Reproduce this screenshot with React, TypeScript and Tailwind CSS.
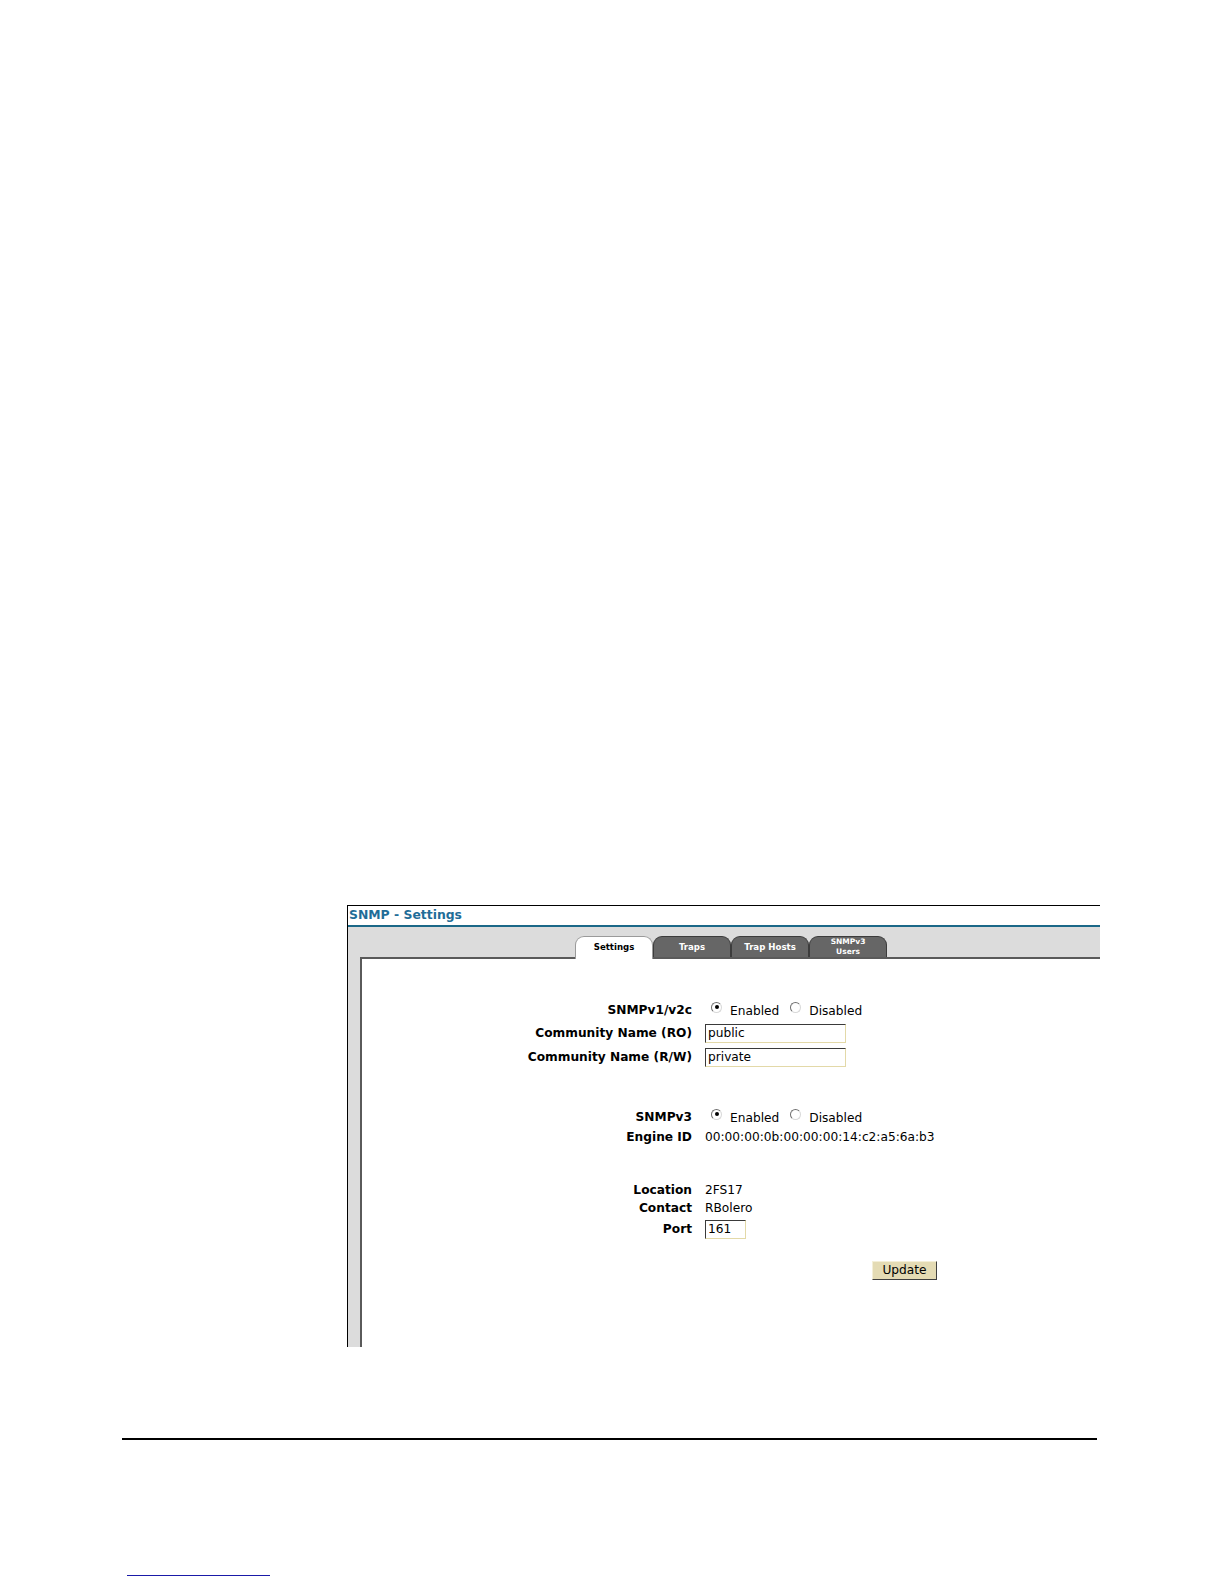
import React from "react";

const font = { fontFamily: '"DejaVu Sans", Verdana, sans-serif' };

function Radio({ checked }: { checked?: boolean }) {
  return (
    <span className="relative -top-[3px] flex h-[11px] w-[11px] shrink-0 items-center justify-center rounded-full border border-t-[#707070] border-l-[#707070] border-b-[#d8d8d8] border-r-[#d8d8d8] bg-white">
      {checked ? <span className="h-[4px] w-[4px] rounded-full bg-black" /> : null}
    </span>
  );
}

function Label({ children }: { children: React.ReactNode }) {
  return (
    <div className="w-[330px] shrink-0 text-right text-[12.2px] font-bold text-black">{children}</div>
  );
}

function TextInput({ value, width }: { value: string; width: string }) {
  return (
    <div
      className={`${width} flex h-[19px] items-center border border-t-[#3a3a3a] border-l-[#3a3a3a] border-b-[#e3d9a8] border-r-[#e3d9a8] bg-white pl-[2px] text-[12.2px] text-black`}
    >
      {value}
    </div>
  );
}

function EnableRow() {
  return (
    <div className="flex items-center text-[12.2px] text-black">
      <span className="ml-[6px] flex">
        <Radio checked />
      </span>
      <span className="ml-[8px] pt-[2px]">Enabled</span>
      <span className="ml-[11px] flex">
        <Radio />
      </span>
      <span className="ml-[8px] pt-[2px]">Disabled</span>
    </div>
  );
}

export default function App() {
  return (
    <div className="relative h-[1584px] w-[1224px] overflow-hidden bg-white" style={font}>
      <div className="pt-[905px]">
        <div className="ml-[347px] flex h-[442px] w-[753px] flex-col border-l border-t border-black">
          {/* title */}
          <div className="flex h-[19px] items-center pl-[1px] text-[12.4px] font-bold leading-none text-[#1f6d98]">
            SNMP - Settings
          </div>
          <div className="h-[2px] bg-[#1b6888]" />
          <div className="flex flex-1 flex-col bg-[#dcdcdc]">
            {/* tabs */}
            <div className="flex h-[30px] items-end pl-[227px]">
              <div className="relative z-10 -mb-[2px] flex h-[23px] w-[78px] items-center justify-center rounded-t-[9px] border border-b-0 border-[#9a9a9a] bg-white pb-[2px] text-[8.6px] font-bold text-black">
                Settings
              </div>
              <div className="flex h-[21px] w-[78px] items-center justify-center rounded-t-[9px] border border-b-0 border-[#3c3c3c] bg-[#666666] text-[8.6px] font-bold text-white">
                Traps
              </div>
              <div className="flex h-[21px] w-[78px] items-center justify-center rounded-t-[9px] border border-b-0 border-[#3c3c3c] bg-[#666666] text-[8.6px] font-bold text-white">
                Trap Hosts
              </div>
              <div className="flex h-[21px] w-[78px] flex-col items-center justify-center rounded-t-[9px] border border-b-0 border-[#3c3c3c] bg-[#666666] text-[7.5px] font-bold leading-[10px] text-white">
                <span>SNMPv3</span>
                <span>Users</span>
              </div>
            </div>
            {/* inner box */}
            <div className="ml-[12px] flex flex-1 flex-col border-l-2 border-t-2 border-l-[#5a5a5a] border-t-[#5a5a5a] bg-white pt-[41px]">
              <div className="flex h-[21px] items-center">
                <Label>SNMPv1/v2c</Label>
                <div className="ml-[13px]">
                  <EnableRow />
                </div>
              </div>
              <div className="flex h-[24px] items-center">
                <Label>Community Name (RO)</Label>
                <div className="ml-[13px]">
                  <TextInput value="public" width="w-[141px]" />
                </div>
              </div>
              <div className="flex h-[24px] items-center">
                <Label>Community Name (R/W)</Label>
                <div className="ml-[13px]">
                  <TextInput value="private" width="w-[141px]" />
                </div>
              </div>

              <div className="mt-[38px] flex h-[20px] items-center">
                <Label>SNMPv3</Label>
                <div className="ml-[13px]">
                  <EnableRow />
                </div>
              </div>
              <div className="flex h-[20px] items-center">
                <Label>Engine ID</Label>
                <div className="ml-[13px] text-[12.2px] text-black">00:00:00:0b:00:00:00:14:c2:a5:6a:b3</div>
              </div>

              <div className="mt-[33px] flex h-[20px] items-center">
                <Label>Location</Label>
                <div className="ml-[13px] text-[12.2px] text-black">2FS17</div>
              </div>
              <div className="flex h-[17px] items-center">
                <Label>Contact</Label>
                <div className="ml-[13px] text-[12.2px] text-black">RBolero</div>
              </div>
              <div className="flex h-[24px] items-center">
                <Label>Port</Label>
                <div className="ml-[13px]">
                  <TextInput value="161" width="w-[41px]" />
                </div>
              </div>

              <div className="mt-[20px] flex">
                <div className="ml-[510px] flex h-[19px] w-[65px] items-center justify-center border border-t-[#f4efd8] border-l-[#f4efd8] border-b-[#404040] border-r-[#404040] bg-[#e4dbb4] text-[12.2px] text-black">
                  Update
                </div>
              </div>
            </div>
          </div>
        </div>
      </div>

      {/* bottom rule */}
      <div className="ml-[122px] mt-[91px] h-[2px] w-[975px] bg-black" />
      {/* link underline */}
      <div className="ml-[127px] mt-[135px] h-[1px] w-[143px] bg-[#1a1aa8]" />
    </div>
  );
}
